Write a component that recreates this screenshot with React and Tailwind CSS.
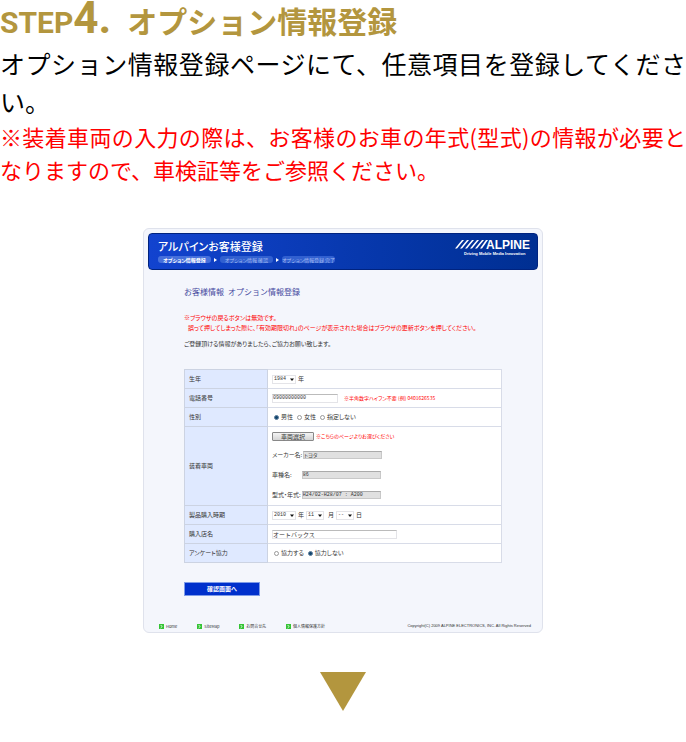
import { ChevronRight } from "lucide-react";

const steps = [
  { label: "オプション情報登録", active: true },
  { label: "オプション情報 確認", active: false },
  { label: "オプション情報登録 完了", active: false },
];

const footerLinks = ["Home", "SiteMap", "お問合せ先", "個人情報保護方針"];

const AlpineLogo = () => (
  <svg viewBox="0 0 76 18" className="h-[18px] w-[76px]" fill="#fff">
    {[0, 5, 10, 15, 20].map((x) => (
      <path key={x} d={`M${x} 9.5 L${x + 7} 1 H${x + 9} L${x + 2} 9.5 Z`} />
    ))}
    <path d="M25 9.5 L31 1 H33 L27 9.5 Z" />
    <text
      x="31"
      y="9.5"
      fontSize="12"
      fontWeight="700"
      fontFamily="Liberation Sans, sans-serif"
    >
      ALPINE
    </text>
    <text
      x="9"
      y="16"
      fontSize="4"
      fontWeight="700"
      fontFamily="Liberation Sans, sans-serif"
    >
      Driving Mobile Media Innovation
    </text>
  </svg>
);

const Row = ({ label, htmlFor, children }) => (
  <tr>
    <th
      scope="row"
      className="h-[19px] w-[83px] border border-[#ccd3e2] bg-[#dfe9ff] p-0 pl-1 text-left font-normal"
    >
      <label htmlFor={htmlFor}>{label}</label>
    </th>
    <td className="h-[19px] border border-[#d8dce8] bg-white p-0 pl-1">
      {children}
    </td>
  </tr>
);

const Select = ({ id, value, label, width }) => (
  <span className={`relative inline-flex items-center ${width}`}>
    <select
      id={id}
      aria-label={label}
      defaultValue={value}
      className="h-[9px] w-full appearance-none border border-[#e4e4e8] bg-white pl-px font-['Liberation_Mono','Noto_Sans_CJK_JP',monospace] text-[5px] leading-[7px]"
    >
      <option>{value}</option>
    </select>
    <svg
      viewBox="0 0 4 3"
      className="pointer-events-none absolute right-[2px] h-[3px] w-1"
    >
      <path d="M0 0.5 H4 L2 3 Z" fill="#111" />
    </svg>
  </span>
);

const Radio = ({ name, label, checked }) => (
  <label className="flex items-center gap-[2px]">
    <input
      type="radio"
      name={name}
      defaultChecked={checked}
      className="size-[5px] appearance-none rounded-full border border-[#999] bg-white checked:border-[#5f7f9c] checked:bg-[#12466e]"
    />
    {label}
  </label>
);

const ReadOnly = ({ id, label, value, gap }) => (
  <div className={`flex h-5 items-center ${gap}`}>
    <label htmlFor={id}>{label}</label>
    <input
      id={id}
      readOnly
      defaultValue={value}
      className="h-2 w-[79px] border border-[#c8c8c8] border-t-[#aaa] bg-[#e0e0e0] font-['Liberation_Mono','Noto_Sans_CJK_JP',monospace] text-[5px] leading-[6px]"
    />
  </div>
);

const RegisterPanel = () => (
  <section className="mx-auto mt-[42px] w-full max-w-[400px] whitespace-nowrap rounded-md border border-[#dfe2ec] bg-[#f4f6fc] p-1 pb-px text-[6px] leading-[10px] text-[#333] [font-feature-settings:'palt']">
    <header className="flex h-[37px] items-start justify-between rounded-[4px] border border-[#00237f] bg-linear-to-r from-[#1243cf] to-[#002f92] pl-[9px] pr-[6px] pt-[5px]">
      <div>
        <h2 className="text-[11px] leading-[14px] font-medium text-white">
          アルパインお客様登録
        </h2>
        <ol className="flex items-center pt-[3px] text-[5px] leading-[7px]">
          {steps.map((step, i) => (
            <li key={step.label} className="flex items-center">
              {i > 0 && (
                <svg viewBox="0 0 3 4" className="mx-[3px] h-1 w-[3px]">
                  <path d="M0 0 L3 2 L0 4 Z" fill="#fff" />
                </svg>
              )}
              <span
                className={
                  step.active
                    ? "w-[53px] rounded-[3px] bg-[#4670dc] text-center font-bold text-white"
                    : "w-[53px] rounded-[3px] bg-[#3160d0] text-center text-[#a3baf2]"
                }
              >
                {step.label}
              </span>
            </li>
          ))}
        </ol>
      </div>
      <AlpineLogo />
    </header>

    <div className="pl-9 pr-9">
      <h3 className="pt-4 text-[8px] leading-3 text-[#4549a0] [font-feature-settings:normal]">
        お客様情報&ensp;オプション情報登録
      </h3>
      <p className="mt-[15px] text-[#f00]">
        ※ブラウザの戻るボタンは無効です。
        <br />
        <span className="pl-1">
          誤って押してしまった際に、「有効期限切れ」のページが表示された場合はブラウザの更新ボタンを押してください。
        </span>
      </p>
      <p className="mt-[6px]">
        ご登録頂ける情報がありましたら、ご協力お願い致します。
      </p>

      <form onSubmit={(e) => e.preventDefault()}>
        <table className="mt-5 w-full border-collapse">
          <tbody>
            <Row label="生年" htmlFor="birth">
              <div className="flex items-center gap-[2px]">
                <Select id="birth" value="1984" width="w-6" />年
              </div>
            </Row>
            <Row label="電話番号" htmlFor="tel">
              <div className="flex items-center gap-[6px]">
                <input
                  id="tel"
                  type="tel"
                  defaultValue="09000000000"
                  className="h-[9px] w-[66px] border border-[#e4e4e8] border-t-[#bbb] font-['Liberation_Mono',monospace] text-[5px]"
                />
                <span className="text-[5px] text-[#f00]">
                  ※半角数字ハイフン不要 (例) 0401626535
                </span>
              </div>
            </Row>
            <Row label="性別">
              <div className="flex items-center gap-1 pl-[2px]">
                <Radio name="sex" label="男性" checked />
                <Radio name="sex" label="女性" />
                <Radio name="sex" label="指定しない" />
              </div>
            </Row>
            <Row label="装着車両">
              <div className="flex h-[18px] items-center gap-[2px]">
                <button className="h-[9px] w-[42px] rounded-[1px] border border-[#888] bg-linear-to-b from-[#f4f4f4] to-[#d4d4d4] leading-[7px]">
                  車両選択
                </button>
                <span className="text-[5px] text-[#f00]">
                  ※こちらのページよりお選びください
                </span>
              </div>
              <ReadOnly
                id="maker"
                label="メーカー名:"
                value="トヨタ"
                gap="gap-px"
              />
              <ReadOnly id="car" label="車種名:" value="86" gap="gap-[10px]" />
              <ReadOnly
                id="model"
                label="型式・年式:"
                value="H24/02-H28/07 : A200"
                gap="gap-px"
              />
            </Row>
            <Row label="製品購入時期" htmlFor="year">
              <div className="flex items-center gap-[2px]">
                <Select id="year" value="2010" width="w-6" />年
                <Select label="月" value="11" width="w-[18px]" />
                <span className="pl-[2px]">月</span>
                <Select label="日" value="--" width="w-[18px]" />日
              </div>
            </Row>
            <Row label="購入店名" htmlFor="shop">
              <input
                id="shop"
                defaultValue="オートバックス"
                className="block h-[9px] w-[125px] border border-[#e4e4e8] border-t-[#bbb] leading-[7px] [font-feature-settings:normal]"
              />
            </Row>
            <Row label="アンケート協力">
              <div className="flex items-center gap-1 pl-[2px]">
                <Radio name="survey" label="協力する" />
                <Radio name="survey" label="協力しない" checked />
              </div>
            </Row>
          </tbody>
        </table>
        <button className="mt-[19px] block h-[14px] w-[76px] border border-[#7e9be8] bg-[#0030cc] leading-3 font-bold text-white">
          確認画面へ
        </button>
      </form>
    </div>

    <footer className="mt-[25px] flex items-center gap-5 pl-[11px] pr-[7px] text-[4px] leading-[10px]">
      {footerLinks.map((link) => (
        <a key={link} href="#" className="flex items-center gap-[2px]">
          <span className="bg-[#35c435] text-white">
            <ChevronRight className="size-[5px]" strokeWidth={4} />
          </span>
          {link}
        </a>
      ))}
      <small className="ml-auto font-['Liberation_Sans',sans-serif] text-[4px]">
        Copyright(C) 2009 ALPINE ELECTRONICS, INC. All Rights Reserved
      </small>
    </footer>
  </section>
);

const App = () => {
  return (
    <main
      lang="ja"
      className="bg-white pb-[31px] font-['Noto_Sans_CJK_JP',sans-serif] text-black"
    >
      <h1 className="flex h-11 items-baseline text-[30px] leading-9 font-bold text-[#b3963e]">
        <span className="font-[Roboto,sans-serif]">STEP</span>
        <span className="mr-4 font-[Roboto,sans-serif] text-[44px]">4.</span>
        <span>オプション情報登録</span>
      </h1>
      <p className="text-justify text-[25px] leading-[38px]">
        オプション情報登録ページにて、任意項目を登録してください。
      </p>
      <p className="text-justify text-[22px] leading-[33px] text-[#f00]">
        ※装着車両の入力の際は、お客様のお車の年式(型式)の情報が必要となりますので、車検証等をご参照ください。
      </p>
      <RegisterPanel />
      <svg viewBox="0 0 46 39" className="mx-auto mt-[39px] h-[39px] w-[46px]">
        <path d="M0 0 H46 L23 39 Z" fill="#b3963e" />
      </svg>
    </main>
  );
};

export default App;
